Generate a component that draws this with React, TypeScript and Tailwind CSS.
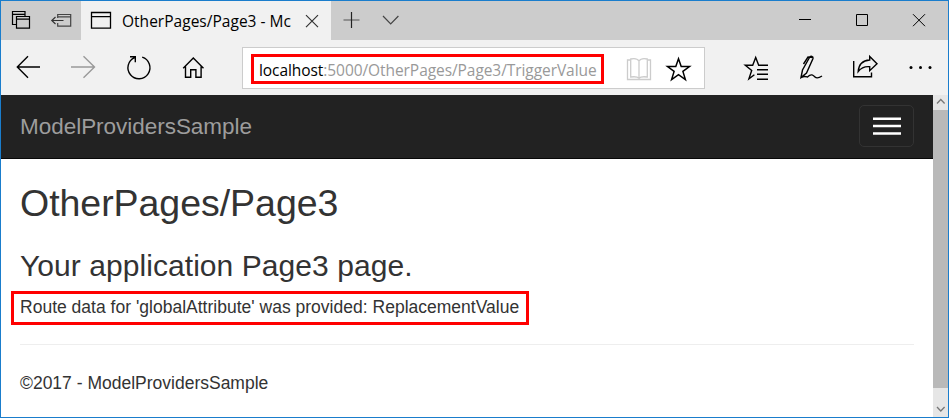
import React from "react";

type IconProps = { box: string; className: string; children: React.ReactNode; width?: number };

function Icon({ box, className, children, width = 1.3 }: IconProps) {
  return (
    <svg viewBox={box} className={`block shrink-0 ${className}`} fill="none" stroke="currentColor" strokeWidth={width}>
      {children}
    </svg>
  );
}

function TabStrip() {
  return (
    <div className="flex h-[39px] bg-[#cccccc] text-black">
      <div className="flex w-20 shrink-0">
        <Icon box="1 1 80 39" className="h-[39px] w-20" width={1.2}>
          <path d="M16 24.5h-3.5v-13h12.5v5M12.5 14.3H25" />
          <path d="M16.5 16.5h13v11.7h-13zM16.5 19.2h13" />
          <path d="M57.7 18v-3.5h13v11.7h-13V23M57.7 16.8h13" stroke="#444" />
          <path d="M63.5 20.5H52M55.5 17l-3.7 3.5 3.7 3.5" stroke="#333" />
        </Icon>
      </div>
      <div className="flex w-[250px] shrink-0 items-center bg-[#f1f1f1]">
        <Icon box="90 10 22 20" className="ml-[9px] h-5 w-[22px]">
          <path d="M91.5 11.5h19v15.7h-19zM91.5 15.7h19" />
        </Icon>
        <div className="ml-[10px] w-[170px] overflow-hidden whitespace-nowrap font-['Open_Sans','Noto_Sans',sans-serif] text-[15.5px] leading-6 tracking-[0.02px]">
          OtherPages/Page3 - Mc
        </div>
        <Icon box="305 13 14 14" className="ml-[13px] h-[14px] w-[14px]" width={1.2}>
          <path d="M306 14.2l12 12M318 14.2l-12 12" stroke="#333" />
        </Icon>
      </div>
      <Icon box="331 1 80 39" className="h-[39px] w-20" width={1.2}>
        <path d="M343.5 20h16" stroke="#666" />
        <path d="M351.5 12v16" stroke="#222" />
        <path d="M383 16l7.7 8 7.7-8" stroke="#444" />
      </Icon>
      <div className="grow" />
      <Icon box="788 1 160 39" className="h-[39px] w-40" width={1}>
        <path d="M799 19.5h12M856.5 14.5h11v11h-11z" />
        <path d="M913 14.2l12 12M925 14.2l-12 12" />
      </Icon>
    </div>
  );
}

function Toolbar() {
  return (
    <div className="flex h-[55px] items-center bg-[#f1f1f1] text-black">
      <Icon box="1 40 241 55" className="h-[55px] w-[241px]" width={1.4}>
        <path d="M40 67H17.5M28 56.3L17.3 67 28 77.8" />
        <path d="M71 67h23.5M83.5 56.3L94.5 67 83.5 77.8" stroke="#999" />
        <path d="M142.2 57.2a11 11 0 1 1-7.6.4M130 56.8h5.3v5.5" />
        <path d="M183.2 68.3L193.3 58l10.2 10.3M185.5 66.5v10.7h5.2v-7.5h5.2v7.5h5.2V66.5" />
      </Icon>
      <div className="mt-px flex h-[42px] w-[463px] shrink-0 items-center border border-[#cccccc] bg-white">
        <div className="mt-[2px] ml-2 flex h-[30px] w-[353px] shrink-0 items-center border-[3px] border-[#ff0000] pt-px pl-[5px] font-['Open_Sans','Noto_Sans',sans-serif] text-[15.5px] leading-6 tracking-[-0.07px] whitespace-nowrap text-[#999999]">
          <span className="text-black">localhost</span>
          <span>:5000/OtherPages/Page3/TriggerValue</span>
        </div>
        <Icon box="604 48 100 40" className="h-10 w-[100px]">
          <g stroke="#ccc">
            <path d="M630 60h-2.500v19.500h23V60H648" />
            <path d="M639 61v17.200c-2-2-6-1.500-8.300-1.200V59c2.300-.5 6.500-.8 8.300 2 1.800-2.800 6-2.500 8.300-2v18c-2.300-.3-6.300-.8-8.300 1.200" />
          </g>
          <path d="M678.500 58.800l2.700 7.700h8.300l-6.600 4.900 2.500 8.100-6.900-4.900-6.900 4.900 2.500-8.100-6.600-4.900h8.300z" strokeWidth="1.500" />
        </Icon>
      </div>
      <Icon box="705 40 243 55" className="h-[55px] w-[243px]" width={1.4}>
        <path d="M768 65.300h-9.300l-3-7.800-3 7.800h-7.400l6.400 5.100-2.800 8.400 5.500-4M757 69.700h11M757 74.300h11M757 79.200h11" />
        <path d="M801 77.500l1.500-7.500 7-12.500c1-2.200 4-1 3.500 1l-6.500 14.500zM803.500 64l4.500-7 5 .5M801 77.500c4-2 6-.5 6.500-.5 4-4 6-1.500 7.500 0s4 1 7-1" />
        <path d="M853.700 61v15.700h17.800V72.500" />
        <path d="M858.200 71.500c.5-7 4.500-11 11.500-11.500v-3.500l7.300 7.200-7.300 7v-4c-5-.5-8.500 1-11.500 4.800z" />
        <g fill="currentColor" stroke="none">
          <circle cx="911" cy="67.500" r="1.500" />
          <circle cx="920.500" cy="67.500" r="1.500" />
          <circle cx="930" cy="67.500" r="1.500" />
        </g>
      </Icon>
    </div>
  );
}

function Page() {
  return (
    <div className="flex w-[932px] shrink-0 flex-col bg-white font-['Liberation_Sans',Arial,sans-serif] text-[#333333]">
      <nav className="flex h-16 shrink-0 items-center justify-between border-b border-[#080808] bg-[#222222] pr-[19px] pl-[19px]">
        <span className="text-[22.5px] leading-7 tracking-[-0.03px] text-[#9d9d9d]">ModelProvidersSample</span>
        <button className="mb-px flex h-[42px] w-[55px] items-center justify-center rounded-[5px] border border-[#333333] text-white">
          <Icon box="873 116 28 20" className="h-5 w-7" width={2.4}>
            <path d="M873 118.700h28M873 126h28M873 133.500h28" />
          </Icon>
        </button>
      </nav>
      <main className="flex flex-col">
        <h2 className="mt-6 ml-[19px] text-[37.5px] leading-[41px] tracking-[-0.04px] whitespace-nowrap">OtherPages/Page3</h2>
        <h3 className="mt-[25px] ml-[19px] text-[30px] leading-[33px] tracking-[0.06px] whitespace-nowrap">Your application Page3 page.</h3>
        <p className="mt-[9px] ml-[10px] flex h-[34px] w-[518px] items-center border-[3px] border-[#ff0000] pb-[2px] pl-[6px] text-[17.5px] leading-[25px] tracking-[0.01px] whitespace-nowrap">
          Route data for 'globalAttribute' was provided: ReplacementValue
        </p>
        <hr className="mt-[19px] mr-[19px] ml-[19px] border-[#eeeeee]" />
        <footer className="mt-[26px] ml-[19px] text-[17.5px] leading-[25px]">©2017 - ModelProvidersSample</footer>
      </main>
    </div>
  );
}

export default function App() {
  return (
    <div className="flex h-[418px] w-[949px] flex-col overflow-hidden border border-[#1a7dcc]">
      <TabStrip />
      <Toolbar />
      <div className="flex min-h-0 grow">
        <Page />
        <div className="flex w-[15px] flex-col bg-[#b9b9b9] text-[#777777]">
          <Icon box="933 95 15 15" className="h-[15px] w-[15px] bg-[#e6e6e6]">
            <path d="M937 103.500l3.800-4 3.800 4" />
          </Icon>
          <div className="grow" />
          <Icon box="933 388 15 29" className="h-[29px] w-[15px] bg-[#e6e6e6]">
            <path d="M937 407l3.800 4 3.800-4" />
          </Icon>
        </div>
      </div>
    </div>
  );
}
